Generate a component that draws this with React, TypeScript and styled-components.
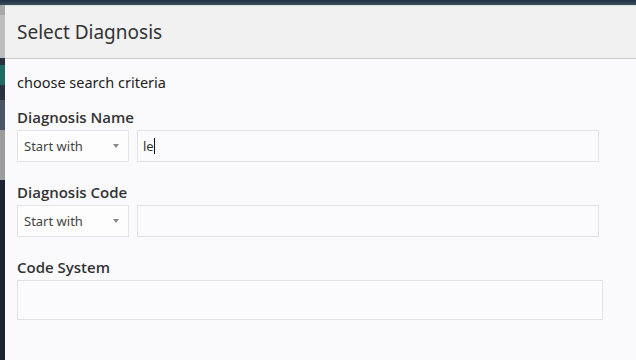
import styled, { createGlobalStyle } from 'styled-components'

const GlobalStyle = createGlobalStyle`
    html, body {
        margin: 0;
        padding: 0;
        width: 636px;
        height: 360px;
        overflow: hidden;
        background: #1c2333;
        font-family: "Noto Sans", "Open Sans", sans-serif;
    }
`

const Page = styled.div`
    display: grid;
    grid-template-columns: 5px 1fr;
    grid-template-rows: 5px 1fr;
    width: 636px;
    height: 360px;
`

const TopStrip = styled.div`
    grid-column: 1 / 3;
    background: linear-gradient(#1f3344, #3b4d5c);
`

const SideStrip = styled.div`
    display: flex;
    flex-direction: column;
`

const StripBit = styled.div<{ $h: number; $c: string }>`
    height: ${p => p.$h}px;
    background: ${p => p.$c};
`

const Modal = styled.div`
    display: flex;
    flex-direction: column;
    background: #fafafc;
    width: 660px;
`

const Header = styled.div`
    height: 52px;
    display: flex;
    align-items: center;
    padding: 0 12px;
    background: #f1f1f2;
    border-top: 1px solid #e3e3e5;
    border-bottom: 1px solid #c9c9cb;
`

const Title = styled.h4`
    margin: 0;
    font-size: 19px;
    font-weight: 400;
    color: #333;
`

const Body = styled.div`
    display: flex;
    flex-direction: column;
    padding: 12px 12px;
`

const Hint = styled.div`
    font-size: 14.5px;
    color: #222;
    line-height: 22px;
    margin-bottom: 13px;
`

const Field = styled.div<{ $gap?: number }>`
    display: flex;
    flex-direction: column;
    margin-bottom: ${p => p.$gap ?? 20}px;
`

const Label = styled.label`
    font-family: "Open Sans", "Noto Sans", sans-serif;
    font-size: 15px;
    font-weight: 600;
    color: #333;
    line-height: 22px;
    margin-bottom: 2px;
`

const Row = styled.div`
    display: flex;
    gap: 8px;
`

const Select = styled.div`
    box-sizing: border-box;
    width: 112px;
    height: 32px;
    display: flex;
    align-items: center;
    justify-content: space-between;
    padding: 0 9px 0 6px;
    background: #fdfdfe;
    border: 1px solid #e4e4e6;
    font-size: 13px;
    color: #444;
`

const Caret = styled.span`
    width: 0;
    height: 0;
    border-left: 3px solid transparent;
    border-right: 3px solid transparent;
    border-top: 4px solid #888;
`

const Input = styled.div<{ $w: number; $h: number }>`
    box-sizing: border-box;
    width: ${p => p.$w}px;
    height: ${p => p.$h}px;
    display: flex;
    align-items: center;
    padding: 0 5px;
    background: #fbfbfd;
    border: 1px solid #e2e2e4;
    font-size: 13px;
    color: #333;
`

const Cursor = styled.span`
    width: 1px;
    height: 16px;
    background: #111;
`

const strip = [
    { h: 10, c: '#a9a9ab' },
    { h: 43, c: '#bdbdbf' },
    { h: 7, c: '#2a3140' },
    { h: 20, c: '#1f6b64' },
    { h: 15, c: '#2b3242' },
    { h: 30, c: '#4a5565' },
    { h: 50, c: '#9c9c9e' },
    { h: 180, c: '#1c2333' },
]

function App() {
    return (
        <>
            <GlobalStyle />
            <Page>
                <TopStrip />
                <SideStrip>
                    {strip.map((s, i) => (
                        <StripBit key={i} $h={s.h} $c={s.c} />
                    ))}
                </SideStrip>
                <Modal>
                    <Header>
                        <Title>Select Diagnosis</Title>
                    </Header>
                    <Body>
                        <Hint>choose search criteria</Hint>
                        <Field $gap={19}>
                            <Label>Diagnosis Name</Label>
                            <Row>
                                <Select>
                                    Start with
                                    <Caret />
                                </Select>
                                <Input $w={462} $h={32}>
                                    le
                                    <Cursor />
                                </Input>
                            </Row>
                        </Field>
                        <Field $gap={19}>
                            <Label>Diagnosis Code</Label>
                            <Row>
                                <Select>
                                    Start with
                                    <Caret />
                                </Select>
                                <Input $w={462} $h={32} />
                            </Row>
                        </Field>
                        <Field>
                            <Label>Code System</Label>
                            <Input $w={586} $h={40} />
                        </Field>
                    </Body>
                </Modal>
            </Page>
        </>
    )
}

export default App
